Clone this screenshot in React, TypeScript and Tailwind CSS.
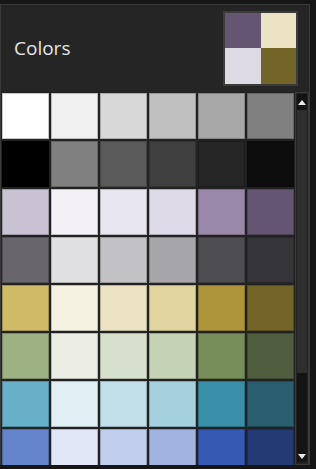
import React from "react";

const rows: string[][] = [
  ["#ffffff", "#f0f0f0", "#d8d8d8", "#c0c0c0", "#a8a8a8", "#808080"],
  ["#000000", "#808080", "#5a5a5a", "#404040", "#262626", "#0d0d0d"],
  ["#c8c2d3", "#f3f1f5", "#e8e6ee", "#dedae8", "#9a88a8", "#645672"],
  ["#68666c", "#e0e0e2", "#c2c2c6", "#a6a6aa", "#4e4e52", "#36363a"],
  ["#cfba68", "#f5f2e2", "#ebe2c1", "#e1d49e", "#ae953a", "#736528"],
  ["#9db183", "#eceee5", "#d6e0cc", "#c4d2b5", "#778d5a", "#4e5d3e"],
  ["#68b0c8", "#e1eef3", "#c1dfe9", "#a5d1df", "#3a8fa8", "#2a5e6f"],
  ["#6484cc", "#e0e6f6", "#c0cdec", "#a2b3e2", "#3659b4", "#233a75"],
];

export default function App() {
  return (
    <div className="w-[316px] h-[469px] bg-[#161616] overflow-hidden pt-[4px]">
      <div className="w-[310px] h-[461px] border border-b-0 border-[#3a3a3a] bg-[#252525] flex flex-col">
        <div className="h-[87px] flex items-center justify-between pl-[13px] pr-[11px] shrink-0">
          <span
            className="text-[19px] text-[#e6e6e6] leading-none"
            style={{ fontFamily: '"Open Sans", "Noto Sans", sans-serif' }}
          >
            Colors
          </span>
          <div className="w-[75px] h-[75px] border-2 border-[#3c3c3c] grid grid-cols-2 grid-rows-2 mt-[-1px]">
            <div className="bg-[#645672]" />
            <div className="bg-[#ebe2c3]" />
            <div className="bg-[#dedae4]" />
            <div className="bg-[#736528]" />
          </div>
        </div>
        <div className="flex flex-1 bg-[#222222] overflow-hidden h-[373px]">
          <div className="w-[295px] pl-[1px] pt-[1px] overflow-hidden">
            <div className="grid grid-cols-[repeat(6,47px)] auto-rows-[46px] gap-[2px]">
              {rows.flat().map((c, i) => (
                <div
                  key={i}
                  className="border border-[#00000038]"
                  style={{ backgroundColor: c }}
                />
              ))}
            </div>
          </div>
          <div className="w-[14px] h-[373px] border border-[#3a3a3a] flex flex-col p-[1px] pb-[2px]">
            <div className="h-[16px] bg-[#141414] flex items-center justify-center shrink-0">
              <svg width="8" height="5" viewBox="0 0 8 5">
                <polygon points="0,5 8,5 4,0" fill="#e8e8e8" />
              </svg>
            </div>
            <div className="h-[263px] bg-[#2e2e2e] shrink-0" />
            <div className="flex-1 bg-[#141414] flex items-end justify-center pb-[3px]">
              <svg width="8" height="5" viewBox="0 0 8 5">
                <polygon points="0,0 8,0 4,5" fill="#e8e8e8" />
              </svg>
            </div>
          </div>
        </div>
      </div>
    </div>
  );
}
